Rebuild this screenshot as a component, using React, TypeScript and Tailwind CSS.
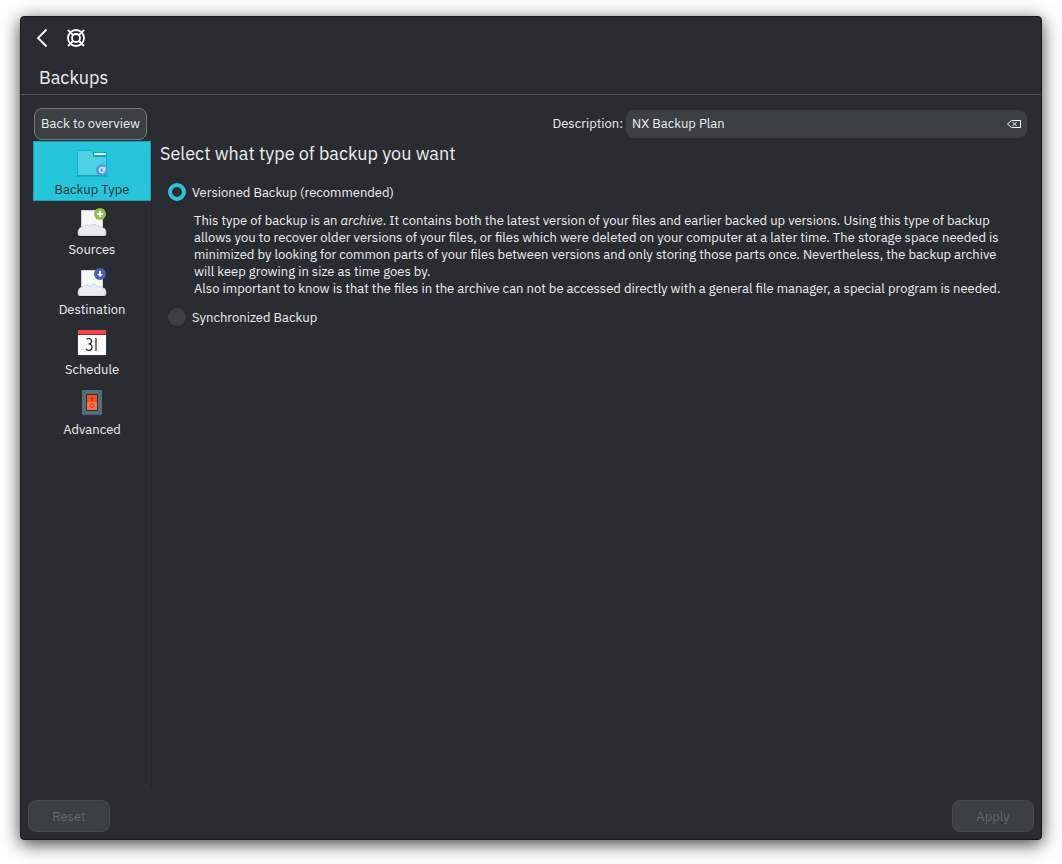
import { useState, type ReactNode } from "react";

interface Page {
  id: string;
  title: string;
  icon: ReactNode;
}

const FolderIcon = () => (
  <svg className="h-8 w-8" viewBox="0 0 32 32" aria-hidden="true">
    <path
      d="M1.5 5.5Q1.5 4.500 2.500 4.500H15l2 3h13.500v22h-29z"
      fill="#4dd0e1"
      stroke="#0cb4ca"
    />
    <path d="M1 30h30" stroke="#0898aa" />
    <path d="M17 6h14v5H17z" fill="#00acc1" />
    <path d="M18 7h12v2H18z" fill="#fff8f0" />
    <circle cx="26" cy="24" r="6" fill="#4c9bf0" />
    <path
      d="M28 22.300A2.600 2.600 0 1 0 28.500 25"
      fill="none"
      stroke="#e3f2fd"
      strokeWidth="1.500"
    />
    <path d="M29.500 20.500v4h-4z" fill="#e3f2fd" />
  </svg>
);

const CloudPageIcon = ({ type }: { type: "add" | "down" }) => (
  <svg className="h-8 w-8" viewBox="0 0 32 32" aria-hidden="true">
    <path d="M5.500 4.500h21v22h-21z" fill="#f7f7f7" stroke="#d8d2d2" />
    <path
      d="M2 27c0-4 2-6 5-6 1-2 5-3 7 0 1-3 6-4 8 0 3-1 4 0 5 1 2 0 3 2 3 5 0 2-1 3-2 3H4c-1 0-2-1-2-3z"
      fill="#e9edf0"
      stroke="#b9c5cc"
      strokeWidth="0.700"
    />
    <path d="M3 30.500h26" stroke="#18191c" />
    <circle cx="24" cy="8" r="6" fill={type === "add" ? "#8bc34a" : "#4c5bc0"} />
    {type === "add" ? (
      <path d="M24 5v6M21 8h6" stroke="#fff" strokeWidth="2" />
    ) : (
      <>
        <path d="M24 5v4" stroke="#fff" strokeWidth="2" />
        <path d="M21 8h6l-3 3z" fill="#fff" />
      </>
    )}
  </svg>
);

const CalendarIcon = () => (
  <svg className="h-8 w-8" viewBox="0 0 32 32" aria-hidden="true">
    <path d="M1 4h30v26H1z" fill="#263a42" />
    <path d="M2 5h28v24H2z" fill="#fff" />
    <path d="M2 4h28v4H2z" fill="#ef4b48" />
    <path d="M2 8h28v1H2z" fill="#b71c1c" />
    <path
      d="M10.500 13.500c1-1.500 5-1.500 5 1.500 0 2-1.500 3-3 3 2 0 3.500 1 3.500 3.500 0 3.500-5 3.500-6 1.500M20 12v13"
      fill="none"
      stroke="#222"
      strokeWidth="1.200"
    />
  </svg>
);

const SwitchIcon = () => (
  <svg className="h-8 w-8" viewBox="0 0 32 32" aria-hidden="true">
    <rect x="6" y="4" width="20" height="25" rx="1" fill="#546e7a" />
    <path d="M6 29h20" stroke="#37474f" />
    <path d="M10 8h12v17H10z" fill="#263238" />
    <path d="M11 9h10v7H11z" fill="#f4511e" />
    <path d="M11 16h10v8H11z" fill="#ff7043" />
    <path d="M16 11v4" stroke="#bf360c" strokeWidth="1.500" />
    <circle cx="16" cy="19.500" r="1.800" fill="none" stroke="#d84315" />
    <path
      d="M8 6.500h1M23 6.500h1M8 26.500h1M23 26.500h1"
      stroke="#37474f"
      strokeWidth="1.500"
    />
  </svg>
);

const pages: Page[] = [
  { id: "type", title: "Backup Type", icon: <FolderIcon /> },
  { id: "sources", title: "Sources", icon: <CloudPageIcon type="add" /> },
  { id: "destination", title: "Destination", icon: <CloudPageIcon type="down" /> },
  { id: "schedule", title: "Schedule", icon: <CalendarIcon /> },
  { id: "advanced", title: "Advanced", icon: <SwitchIcon /> },
];

const radioClass =
  "size-[18px] shrink-0 appearance-none rounded-full bg-[#3b4042] shadow-sm checked:border-4 checked:border-[#26c6da] checked:bg-[#2b2c31]";

const footerButtonClass =
  "h-8 w-[82px] rounded-lg border border-[#454a4c] bg-[#3b4042] pt-px text-[#62676a]";

export default function App() {
  const [activePage, setActivePage] = useState("type");
  const [description, setDescription] = useState("NX Backup Plan");
  const [backupType, setBackupType] = useState("versioned");

  return (
    <div className="flex min-h-screen flex-col bg-white px-5 pt-4 pb-6 font-['IBM_Plex_Sans',Roboto,sans-serif] text-[13px] text-[#eceff1]">
      <div className="flex grow flex-col rounded border border-[#17181b] bg-[#2b2c31] shadow-[0_4px_18px_rgba(0,0,0,0.75)]">
        <header className="border-b border-[#535458]">
          <div className="flex h-[42px] items-center gap-[14px] px-3">
            <button type="button" aria-label="Back">
              <svg className="size-5" viewBox="0 0 20 20" fill="none">
                <path d="M13.500 1.500 5 10l8.500 8.500" stroke="#fff" strokeWidth="1.800" />
              </svg>
            </button>
            <button type="button" aria-label="Help">
              <svg
                className="size-5"
                viewBox="0 0 20 20"
                fill="none"
                stroke="#fff"
                strokeWidth="1.800"
              >
                <circle cx="9" cy="10" r="8" />
                <circle cx="9" cy="10" r="4" />
                <path d="m1 2 5 5M17 2l-5 5M1 18l5-5M17 18l-5-5" />
              </svg>
            </button>
          </div>
          <h1 className="h-[35px] px-[18px] pt-[5px] text-lg leading-7">Backups</h1>
        </header>

        <div className="flex grow pt-[13px]">
          <aside className="flex w-[131px] shrink-0 flex-col pl-3">
            <button
              type="button"
              className="mr-[5px] ml-px h-8 rounded-lg border border-[#74787a] bg-[#3b4042] whitespace-nowrap"
            >
              Back to overview
            </button>
            <nav className="mt-px grow border-r border-[#232428]">
              {pages.map((page) => (
                <button
                  key={page.id}
                  type="button"
                  onClick={() => setActivePage(page.id)}
                  className={
                    activePage === page.id
                      ? "flex h-[60px] w-full flex-col items-center border border-[#1ba3b5] bg-[#26c6da] pt-1 text-[#263238]"
                      : "flex h-[60px] w-full flex-col items-center border border-transparent pt-1"
                  }
                >
                  {page.icon}
                  <span className="mt-[2px] leading-5">{page.title}</span>
                </button>
              ))}
            </nav>
          </aside>

          <main className="min-w-0 grow pr-[14px] pl-2">
            <div className="flex items-center justify-end gap-[3px] pt-[2px]">
              <label htmlFor="description">Description:</label>
              <div className="flex h-7 w-[401px] items-center rounded-lg bg-[#3b4042] pr-[5px]">
                <input
                  id="description"
                  type="text"
                  value={description}
                  onChange={(e) => setDescription(e.target.value)}
                  className="min-w-0 grow bg-transparent pl-[6px] outline-none"
                />
                <button
                  type="button"
                  aria-label="Clear"
                  onClick={() => setDescription("")}
                >
                  <svg className="size-4" viewBox="0 0 16 16" fill="none" stroke="#fff">
                    <path d="M5.500 4.500h9v7h-9L1.500 8zM6.500 6l4 4M10.500 6l-4 4" />
                  </svg>
                </button>
              </div>
            </div>

            <h2 className="mt-[2px] text-lg leading-7">
              Select what type of backup you want
            </h2>

            <div className="mt-3 flex flex-col pl-2">
              <label className="flex h-6 items-center gap-[6px]">
                <input
                  type="radio"
                  name="backupType"
                  checked={backupType === "versioned"}
                  onChange={() => setBackupType("versioned")}
                  className={radioClass}
                />
                <span className="pt-px">Versioned Backup (recommended)</span>
              </label>
              <p className="my-2 pl-[26px] leading-[17px]">
                This type of backup is an <em>archive</em>. It contains both the
                latest version of your files and earlier backed up versions. Using
                this type of backup
                <br />
                allows you to recover older versions of your files, or files which
                were deleted on your computer at a later time. The storage space
                needed is
                <br />
                minimized by looking for common parts of your files between versions
                and only storing those parts once. Nevertheless, the backup archive
                <br />
                will keep growing in size as time goes by.
                <br />
                Also important to know is that the files in the archive can not be
                accessed directly with a general file manager, a special program is
                needed.
              </p>
              <label className="flex h-6 items-center gap-[6px]">
                <input
                  type="radio"
                  name="backupType"
                  checked={backupType === "synchronized"}
                  onChange={() => setBackupType("synchronized")}
                  className={radioClass}
                />
                <span className="pt-px">Synchronized Backup</span>
              </label>
            </div>
          </main>
        </div>

        <footer className="flex justify-between px-[7px] pt-3 pb-[7px]">
          <button type="button" disabled className={footerButtonClass}>
            Reset
          </button>
          <button type="button" disabled className={footerButtonClass}>
            Apply
          </button>
        </footer>
      </div>
    </div>
  );
}
